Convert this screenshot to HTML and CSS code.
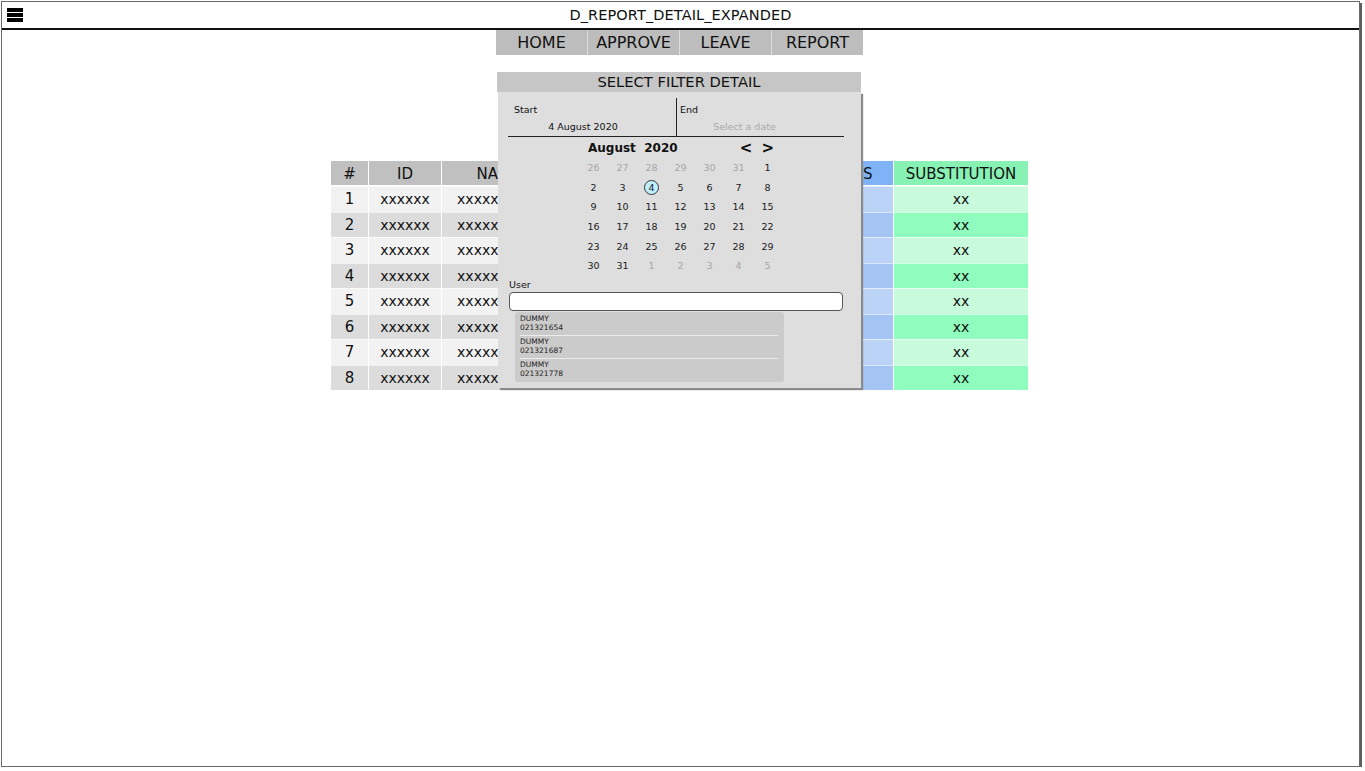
FILE: index.html
```html
<!DOCTYPE html>
<html>
<head>
<meta charset="utf-8">
<title>D_REPORT_DETAIL_EXPANDED</title>
<link rel="stylesheet" href="styles.css">
</head>
<body>
<div class="frame">
  <header class="topbar">
    <svg class="menu-icon" width="16" height="14" viewBox="0 0 16 14"><rect x="0" y="0" width="16" height="4" fill="#000"/><rect x="0" y="5" width="16" height="4" fill="#000"/><rect x="0" y="10" width="16" height="4" fill="#000"/></svg>
    <div class="title">D_REPORT_DETAIL_EXPANDED</div>
  </header>
  <nav class="nav">
    <div class="nav-item">HOME</div>
    <div class="nav-item">APPROVE</div>
    <div class="nav-item">LEAVE</div>
    <div class="nav-item">REPORT</div>
  </nav>
  <main class="content">
    <table class="report">
      <thead>
        <tr>
          <th class="c-num">#</th>
          <th class="c-id">ID</th>
          <th class="c-name">NAME</th>
          <th class="c-pink">START</th>
          <th class="c-orange">END</th>
          <th class="c-blue">PROCESS</th>
          <th class="c-green">SUBSTITUTION</th>
        </tr>
      </thead>
      <tbody>
        <tr><td class="c-num">1</td><td class="c-id">xxxxxx</td><td class="c-name">xxxxxxxxxx</td><td class="c-pink"></td><td class="c-orange"></td><td class="c-blue"></td><td class="c-green">xx</td></tr>
        <tr><td class="c-num">2</td><td class="c-id">xxxxxx</td><td class="c-name">xxxxxxxxxx</td><td class="c-pink"></td><td class="c-orange"></td><td class="c-blue"></td><td class="c-green">xx</td></tr>
        <tr><td class="c-num">3</td><td class="c-id">xxxxxx</td><td class="c-name">xxxxxxxxxx</td><td class="c-pink"></td><td class="c-orange"></td><td class="c-blue"></td><td class="c-green">xx</td></tr>
        <tr><td class="c-num">4</td><td class="c-id">xxxxxx</td><td class="c-name">xxxxxxxxxx</td><td class="c-pink"></td><td class="c-orange"></td><td class="c-blue"></td><td class="c-green">xx</td></tr>
        <tr><td class="c-num">5</td><td class="c-id">xxxxxx</td><td class="c-name">xxxxxxxxxx</td><td class="c-pink"></td><td class="c-orange"></td><td class="c-blue"></td><td class="c-green">xx</td></tr>
        <tr><td class="c-num">6</td><td class="c-id">xxxxxx</td><td class="c-name">xxxxxxxxxx</td><td class="c-pink"></td><td class="c-orange"></td><td class="c-blue"></td><td class="c-green">xx</td></tr>
        <tr><td class="c-num">7</td><td class="c-id">xxxxxx</td><td class="c-name">xxxxxxxxxx</td><td class="c-pink"></td><td class="c-orange"></td><td class="c-blue"></td><td class="c-green">xx</td></tr>
        <tr><td class="c-num">8</td><td class="c-id">xxxxxx</td><td class="c-name">xxxxxxxxxx</td><td class="c-pink"></td><td class="c-orange"></td><td class="c-blue"></td><td class="c-green">xx</td></tr>
      </tbody>
    </table>

    <div class="panel">
      <div class="panel-head">SELECT FILTER DETAIL</div>
      <div class="panel-body">
        <div class="dates">
          <div class="date-col date-start">
            <div class="date-label">Start</div>
            <div class="date-value">4 August 2020</div>
          </div>
          <div class="date-col date-end">
            <div class="date-label">End</div>
            <div class="date-value placeholder">Select a date</div>
          </div>
        </div>
        <div class="calendar">
          <div class="cal-head">
            <span class="cal-month">August&nbsp; 2020</span>
            <span class="cal-arrows"><span>&lt;</span><span>&gt;</span></span>
          </div>
          <div class="cal-grid">
            <span class="muted">26</span><span class="muted">27</span><span class="muted">28</span><span class="muted">29</span><span class="muted">30</span><span class="muted">31</span><span>1</span>
            <span>2</span><span>3</span><span><b class="selected">4</b></span><span>5</span><span>6</span><span>7</span><span>8</span>
            <span>9</span><span>10</span><span>11</span><span>12</span><span>13</span><span>14</span><span>15</span>
            <span>16</span><span>17</span><span>18</span><span>19</span><span>20</span><span>21</span><span>22</span>
            <span>23</span><span>24</span><span>25</span><span>26</span><span>27</span><span>28</span><span>29</span>
            <span>30</span><span>31</span><span class="muted">1</span><span class="muted">2</span><span class="muted">3</span><span class="muted">4</span><span class="muted">5</span>
          </div>
        </div>
        <div class="user">
          <div class="user-label">User</div>
          <div class="user-input"></div>
          <div class="suggest">
            <div class="suggest-item"><div>DUMMY</div><div>021321654</div></div>
            <div class="suggest-item"><div>DUMMY</div><div>021321687</div></div>
            <div class="suggest-item"><div>DUMMY</div><div>021321778</div></div>
          </div>
        </div>
      </div>
    </div>
  </main>
</div>
</body>
</html>
```

FILE: styles.css
```css
* { box-sizing: border-box; }
html, body { margin: 0; padding: 0; background: #fff; }
body { font-family: "DejaVu Sans", Verdana, sans-serif; color: #111; }

.frame {
  margin: 1px 0 0 1px;
  width: 1359px;
  height: 766px;
  border: 1px solid #6a6a6a;
  box-shadow: 2px 2px 0 #5e5e5e;
  position: relative;
  background: #fff;
}

.topbar {
  height: 28px;
  border-bottom: 2px solid #111;
  display: flex;
  align-items: center;
  justify-content: center;
  position: relative;
}
.menu-icon { position: absolute; left: 5px; top: 6px; }
.title { font-size: 14.5px; letter-spacing: 0.1px; color: #111; margin-top: -1px; }

.nav {
  width: 367px;
  margin: 0 auto;
  display: flex;
  background: #bdbdbd;
  height: 25px;
  position: relative;
  left: -1px;
}
.nav-item {
  flex: 1;
  text-align: center;
  font-size: 16px;
  line-height: 25px;
  color: #111;
  border-left: 1px solid #dcdcdc;
}
.nav-item:first-child { border-left: none; }

.content {
  position: relative;
  padding-top: 106px;
  display: flex;
  justify-content: center;
}

.report {
  border-collapse: separate;
  border-spacing: 1px 0;
  font-size: 14px;
  position: relative;
  left: -1px;
}
.report th {
  font-weight: normal;
  font-size: 15px;
  height: 25px;
  padding: 2px 0 0 0;
  text-align: center;
  border-bottom: 1px solid #fff;
}
.report td {
  height: 25.5px;
  padding: 0;
  text-align: center;
  border-top: 1px solid rgba(255,255,255,0.6);
  font-size: 14px;
}
.report td.c-num { font-size: 15px; }
.c-num { width: 37px; }
.c-id { width: 72px; }
.c-name { width: 113px; }
.c-pink { width: 111px; }
.c-orange { width: 113px; }
.c-blue { width: 111px; }
.c-green { width: 134px; }

.report th.c-num, .report th.c-id, .report th.c-name { background: #c0c0c0; }
.report tbody tr:nth-child(odd) td.c-num,
.report tbody tr:nth-child(odd) td.c-id,
.report tbody tr:nth-child(odd) td.c-name { background: #f2f2f2; }
.report tbody tr:nth-child(even) td.c-num,
.report tbody tr:nth-child(even) td.c-id,
.report tbody tr:nth-child(even) td.c-name { background: #dcdcdc; }
.report th.c-pink { background: #f08c8c; }
.report td.c-pink { background: #f6aaaa; }
.report th.c-orange { background: #f4b47a; }
.report td.c-orange { background: #f8c89c; }
.report th.c-blue { background: #7fb2f6; }
.report tbody tr:nth-child(odd) td.c-blue { background: #bad3f7; }
.report tbody tr:nth-child(even) td.c-blue { background: #a4c4f4; }
.report th.c-green { background: #88f2b4; }
.report tbody tr:nth-child(odd) td.c-green { background: #c8fadc; }
.report tbody tr:nth-child(even) td.c-green { background: #90fcbe; }

.panel {
  position: absolute;
  top: 17px;
  left: 495px;
  width: 364px;
}
.panel-head {
  height: 20px;
  background: #c6c6c6;
  text-align: center;
  font-size: 14.7px;
  line-height: 20px;
  color: #111;
}
.panel-body {
  margin-left: 1px;
  width: 363px;
  height: 296px;
  background: #dedede;
  box-shadow: 2px 2px 1px #8a8a8a;
  padding: 0 17px 0 10px;
  position: relative;
}
.dates {
  display: grid;
  grid-template-columns: 169px 1fr;
  border-bottom: 1px solid #222;
  height: 45px;
}
.date-col { margin-top: 6px; padding-top: 6px; }
.date-start { border-right: 1px solid #222; padding-left: 6px; }
.date-end { padding-left: 3px; }
.date-label { font-size: 9.5px; line-height: 12px; color: #111; }
.date-value { font-size: 9.5px; line-height: 12px; margin-top: 5px; text-align: center; color: #111; }
.date-start .date-value { padding-right: 24px; }
.date-value.placeholder { color: #aaa; padding-right: 35px; }

.calendar {
  margin-left: 71px;
  width: 203px;
  padding-top: 3px;
}
.cal-head {
  display: flex;
  justify-content: space-between;
  align-items: center;
  height: 16px;
  padding-left: 9px;
}
.cal-month { font-weight: bold; font-size: 12px; line-height: 14px; color: #111; }
.cal-arrows {
  display: flex;
  gap: 9px;
  font-weight: bold;
  font-size: 15px;
  line-height: 16px;
  margin-right: 8px;
  color: #111;
}
.cal-grid {
  display: grid;
  grid-template-columns: repeat(7, 29px);
  grid-auto-rows: 19.6px;
  margin-top: 2px;
  font-size: 9.5px;
  line-height: 11px;
}
.cal-grid span {
  display: flex;
  align-items: center;
  justify-content: center;
  color: #1a1a1a;
}
.cal-grid span.muted { color: #a6a6a6; }
.selected {
  display: flex;
  align-items: center;
  justify-content: center;
  width: 15px;
  height: 15px;
  border: 1px solid #333;
  border-radius: 50%;
  background: #bff0ff;
  font-weight: normal;
}

.user { margin-top: 3px; margin-left: 1px; }
.user-label { font-size: 9.5px; line-height: 12px; color: #111; }
.user-input {
  margin-top: 1px;
  width: 334px;
  height: 19px;
  background: #fff;
  border: 1px solid #555;
  border-radius: 4px;
}
.suggest {
  margin: 1px 0 0 6px;
  width: 269px;
  background: #cbcbcb;
  border-radius: 3px;
  padding: 0 6px 1px 5px;
}
.suggest-item {
  font-size: 7.5px;
  line-height: 9px;
  color: #222;
  padding: 1px 0 3px 0;
  border-top: 1px solid #ececec;
}
.suggest-item:first-child { border-top: none; padding-top: 2px; }
```
